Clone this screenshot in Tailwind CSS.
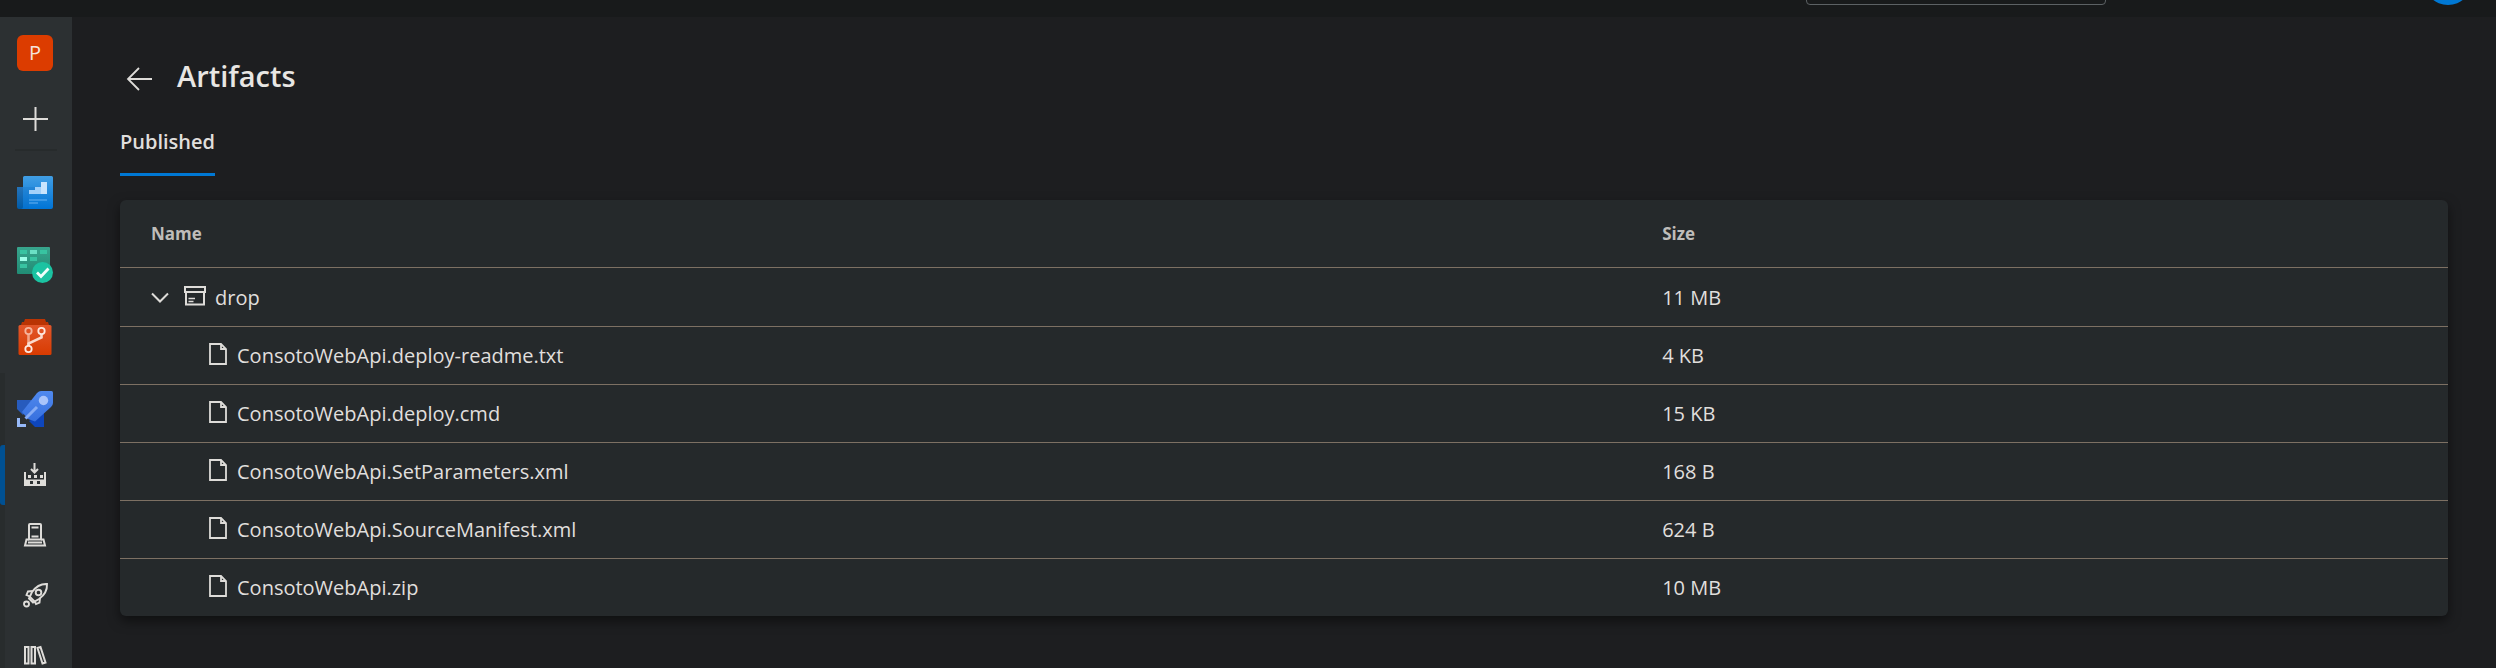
<!DOCTYPE html>
<html lang="en">
<head>
<meta charset="utf-8">
<meta name="viewport" content="width=device-width, initial-scale=1">
<title>Artifacts</title>
<script src="https://cdn.jsdelivr.net/npm/@tailwindcss/browser@4"></script>
</head>
<body class="flex h-screen flex-col overflow-hidden bg-[#1d1e20] font-['Open_Sans','Noto_Sans',sans-serif] text-[20px] text-[#e0dfdd]">
<header class="flex h-[17px] shrink-0 items-end justify-end gap-[318px] bg-[#181a1b] pr-6 pb-3">
  <input type="search" aria-label="Search" class="h-12 w-[300px] rounded-[4px] border border-[#5c6164] bg-transparent px-3">
  <button aria-label="Account" class="size-12 rounded-full bg-[#0078d4]"></button>
</header>
<div class="flex min-h-0 flex-1">
  <nav aria-label="Project" class="flex w-[72px] shrink-0 flex-col overflow-hidden bg-[#2c3032]">
    <a href="#" class="flex h-[72px] shrink-0 items-center pl-[17px]"><span class="flex size-9 items-center justify-center rounded-[6px] bg-[#dc3c00] text-[20px] text-[#f5e3dc]">P</span></a>
    <button aria-label="New" class="flex h-[60px] shrink-0 items-center pl-[22px]">
      <svg width="26" height="26" viewBox="0 0 26 26" stroke="#dedcd9" stroke-width="2" fill="none"><path d="M1 13H26M13.500 1V25"/></svg>
    </button>
    <hr class="mx-[15px] mb-[6px] h-[2px] shrink-0 border-0 bg-[#272b2c]">
    <a href="#" aria-label="Overview" class="flex h-[72px] shrink-0 items-center pl-[17px]">
      <svg width="36" height="36" viewBox="0 0 36 36">
        <defs><linearGradient id="ov" x1="0" y1="0" x2="0" y2="1"><stop offset="0" stop-color="#419ee4"/><stop offset="1" stop-color="#0074d6"/></linearGradient>
        <linearGradient id="ol" x1="0" y1="0" x2="0" y2="1"><stop offset="0" stop-color="#2573b9"/><stop offset="1" stop-color="#005ba8"/></linearGradient></defs>
        <path d="M7.500 1H34.500Q36 1 36 2.500V32Q36 34 34 34H3L6 30V2.500Q6 1 7.500 1Z" fill="url(#ov)"/>
        <path d="M0 12H6V32Q6 34 4 34H2Q0 34 0 32Z" fill="url(#ol)"/>
        <path d="M6 12H18V19H12V34H4Q6 34 6 32Z" fill="#1166ba" opacity=".25"/>
        <path d="M12 15H18V12H24V7H30V19H12Z" fill="#a3d1fa"/><path d="M24 7H30V19H24Z" fill="#c8e4fd"/>
        <path d="M12 25H30M12 28H21" stroke="#69b2f1" stroke-width="1.200"/>
      </svg>
    </a>
    <a href="#" aria-label="Boards" class="flex h-[72px] shrink-0 items-center pl-[17px]">
      <svg width="36" height="36" viewBox="0 0 36 36">
        <defs><linearGradient id="bd" x1="0" y1="0" x2="0" y2="1"><stop offset="0" stop-color="#38a58d"/><stop offset="1" stop-color="#218c75"/></linearGradient></defs>
        <rect width="33" height="27" rx="1" fill="url(#bd)"/>
        <path d="M3 3H10V7H3ZM23 3H30V7H23ZM13 10H20V14H13ZM3 17H10V21H3Z" fill="#38c3a1"/>
        <path d="M13 3H20V7H13Z" fill="#6be0c5"/><path d="M3 10H10V14H3Z" fill="#9dffe8"/>
        <circle cx="25.500" cy="25.500" r="10.500" fill="#1bc3a2"/>
        <path d="M20 25.500L24 29.500L31.500 21.500" fill="none" stroke="#effffb" stroke-width="2.800"/>
      </svg>
    </a>
    <a href="#" aria-label="Repos" class="flex h-[72px] shrink-0 items-center pl-[17px]">
      <svg width="36" height="36" viewBox="0 0 36 36" fill="none">
        <defs><linearGradient id="rp" x1="0" y1="0" x2="0" y2="1"><stop offset="0" stop-color="#e2572b"/><stop offset="1" stop-color="#d83b01"/></linearGradient></defs>
        <path d="M8 0H28L29 3H31L32 6V8H4V6L5 3H7Z" fill="#b93404"/>
        <rect x="1.500" y="6" width="33" height="30" rx="1.500" fill="url(#rp)"/>
        <path d="M11.500 15V27" stroke="#f2a487" stroke-width="2.600"/><path d="M24.500 15V18.500L11.500 24.500V27" stroke="#fbd9cc" stroke-width="2.600"/>
        <circle cx="11.500" cy="12" r="3.200" stroke="#f5b59e" stroke-width="1.800"/>
        <circle cx="24.500" cy="12" r="3.200" stroke="#fde8e0" stroke-width="1.800"/>
        <circle cx="11.500" cy="30" r="3.200" stroke="#fde8e0" stroke-width="1.800"/>
      </svg>
    </a>
    <div class="flex flex-col border-l-[5px] border-[#282c2d] bg-[#2c3032]">
      <a href="#" aria-label="Pipelines" class="flex h-[72px] shrink-0 items-center pl-3">
        <svg width="36" height="36" viewBox="0 0 36 36">
          <defs><linearGradient id="pl" x1="0" y1="0" x2="0" y2="1"><stop offset="0" stop-color="#5089ee"/><stop offset="1" stop-color="#3770de"/></linearGradient></defs>
          <path d="M0 9H15L6 24L0 18Z" fill="#275bbd"/><path d="M12 30L27 21V36H18Z" fill="#0e46bd"/>
          <path d="M20 2Q22 0 24 0H34.500Q36 0 36 1.500V12Q36 14 34 16L18 30.500L11 28L5 21Z" fill="url(#pl)"/>
          <circle cx="26.500" cy="9.500" r="4.700" fill="#a9c4fa"/>
          <path d="M8.500 27.500L20 16" stroke="#86acf5" stroke-width="3"/>
          <path d="M0 27H3V33H9V36H0Z" fill="#97b9f8"/>
        </svg>
      </a>
      <a href="#" aria-label="Builds" aria-current="page" class="relative flex h-[60px] shrink-0 items-center pl-[18px]">
        <span class="absolute inset-y-0 -left-[5px] w-[5px] rounded-l-[3px] bg-[#005092]"></span>
        <svg width="24" height="24" viewBox="0 0 24 24" fill="none" stroke="#dedcd9" stroke-width="2">
          <path d="M11.500 0V9M8 6L11.500 9.500L15 6"/>
          <path d="M1 9H3V16.500H21V9H23V23H1ZM7 18V21H10V18ZM14 18V21H17V18Z" fill="#dedcd9" fill-rule="evenodd" stroke="none"/>
          <path d="M5 12H8V15H5ZM11 12H14V15H11ZM17 12H20V15H17Z" fill="#dedcd9" stroke="none"/>
        </svg>
      </a>
      <a href="#" aria-label="Environments" class="flex h-[60px] shrink-0 items-center pl-[18px]">
        <svg width="24" height="24" viewBox="0 0 24 24" fill="none" stroke="#dedcd9" stroke-width="2">
          <path d="M6 16.500V2Q6 1 7 1H17Q18 1 18 2V16.500ZM8.500 4.500H15.500M8.500 13.500H15.500"/><path d="M6 16.500H3.500L2 22.500H22L20.500 16.500H18M5 19.500H19"/>
        </svg>
      </a>
      <a href="#" aria-label="Releases" class="flex h-[60px] shrink-0 items-center pl-[18px]">
        <svg width="26" height="26" viewBox="0 0 26 26" fill="none" stroke="#dedcd9" stroke-width="1.900">
          <path d="M24 2Q15 1.500 9 10L6 16.500L10 20.500L16 17Q24.500 11 24 2Z"/><path d="M10 9L5 9.500L3.500 13L7 14.500M17 16L16.500 20.500L13 22L11.500 19"/>
          <circle cx="15.500" cy="10.500" r="2.800"/><circle cx="3.500" cy="22" r="2.500"/><path d="M6 14L12 20"/>
        </svg>
      </a>
      <a href="#" aria-label="Library" class="flex h-[60px] shrink-0 items-center pl-[18px]">
        <svg width="24" height="24" viewBox="0 0 24 24" fill="none" stroke="#dedcd9" stroke-width="2">
          <path d="M2 4H5.500V20.500H2ZM8.500 4H12V20.500H8.500ZM14.500 5L17.500 4L22.500 19.500L19.500 20.500Z"/>
        </svg>
      </a>
    </div>
  </nav>
  <main class="min-w-0 flex-1 px-12 pt-[39px]">
    <div class="flex h-10 items-center gap-6">
      <button aria-label="Back" class="pt-[5px] pl-[6px]">
        <svg width="27" height="24" viewBox="0 0 27 24" fill="none" stroke="#dedcd9" stroke-width="1.800"><path d="M26 12H2M13 1L2 12L13 23"/></svg>
      </button>
      <h1 class="text-[29px] leading-10 font-semibold text-[#e8e6e3]">Artifacts</h1>
    </div>
    <div role="tablist" class="mt-6 flex">
      <button role="tab" aria-selected="true" class="h-14 border-b-[3px] border-[#0078d4] pb-[10px] font-semibold">Published</button>
    </div>
    <div class="mt-6 overflow-hidden rounded-[6px] bg-[#25292b] pt-px shadow-[0_5px_12px_rgba(0,0,0,0.5)]">
      <table class="w-full table-fixed border-separate border-spacing-0 text-left [&_td]:border-t [&_td]:border-[#7d7063] [&_td]:px-[29px]">
        <thead>
          <tr class="h-[66px] text-[17px] text-[#bfbdba]"><th scope="col" class="w-[65%] px-[31px] font-bold">Name</th><th scope="col" class="px-[29px] font-bold">Size</th></tr>
        </thead>
        <tbody>
          <tr class="h-[59px]">
            <td class="pt-[2px]"><div class="flex items-center">
              <button aria-label="Collapse drop" class="mr-[15px] ml-[2px]"><svg width="18" height="12" viewBox="0 0 18 12" fill="none" stroke="#dedcd9" stroke-width="2"><path d="M1 1.500L9 9.500L17 1.500"/></svg></button>
              <svg class="mr-[9px] mb-1" width="22" height="20" viewBox="0 0 22 20" fill="none" stroke="#dedcd9" stroke-width="2"><path d="M1 1H21V6H1ZM2 6V18.500H20V6"/><path d="M4.500 12.500H11M4.500 15.500H9.500" stroke-width="1.300"/></svg>
              <span>drop</span></div></td>
            <td class="pt-[2px]">11 MB</td>
          </tr>
          <tr class="h-[58px]"><td><a href="#" class="flex items-center gap-[10px] pl-[60px]"><svg class="mb-1" width="18" height="22" viewBox="0 0 18 22" fill="none" stroke="#dedcd9" stroke-width="1.800"><path d="M1 1H12L17 6V21H1ZM12 1V6H17"/></svg>ConsotoWebApi.deploy-readme.txt</a></td><td>4 KB</td></tr>
          <tr class="h-[58px]"><td><a href="#" class="flex items-center gap-[10px] pl-[60px]"><svg class="mb-1" width="18" height="22" viewBox="0 0 18 22" fill="none" stroke="#dedcd9" stroke-width="1.800"><path d="M1 1H12L17 6V21H1ZM12 1V6H17"/></svg>ConsotoWebApi.deploy.cmd</a></td><td>15 KB</td></tr>
          <tr class="h-[58px]"><td><a href="#" class="flex items-center gap-[10px] pl-[60px]"><svg class="mb-1" width="18" height="22" viewBox="0 0 18 22" fill="none" stroke="#dedcd9" stroke-width="1.800"><path d="M1 1H12L17 6V21H1ZM12 1V6H17"/></svg>ConsotoWebApi.SetParameters.xml</a></td><td>168 B</td></tr>
          <tr class="h-[58px]"><td><a href="#" class="flex items-center gap-[10px] pl-[60px]"><svg class="mb-1" width="18" height="22" viewBox="0 0 18 22" fill="none" stroke="#dedcd9" stroke-width="1.800"><path d="M1 1H12L17 6V21H1ZM12 1V6H17"/></svg>ConsotoWebApi.SourceManifest.xml</a></td><td>624 B</td></tr>
          <tr class="h-[58px]"><td><a href="#" class="flex items-center gap-[10px] pl-[60px]"><svg class="mb-1" width="18" height="22" viewBox="0 0 18 22" fill="none" stroke="#dedcd9" stroke-width="1.800"><path d="M1 1H12L17 6V21H1ZM12 1V6H17"/></svg>ConsotoWebApi.zip</a></td><td>10 MB</td></tr>
        </tbody>
      </table>
    </div>
  </main>
</div>
</body>
</html>
